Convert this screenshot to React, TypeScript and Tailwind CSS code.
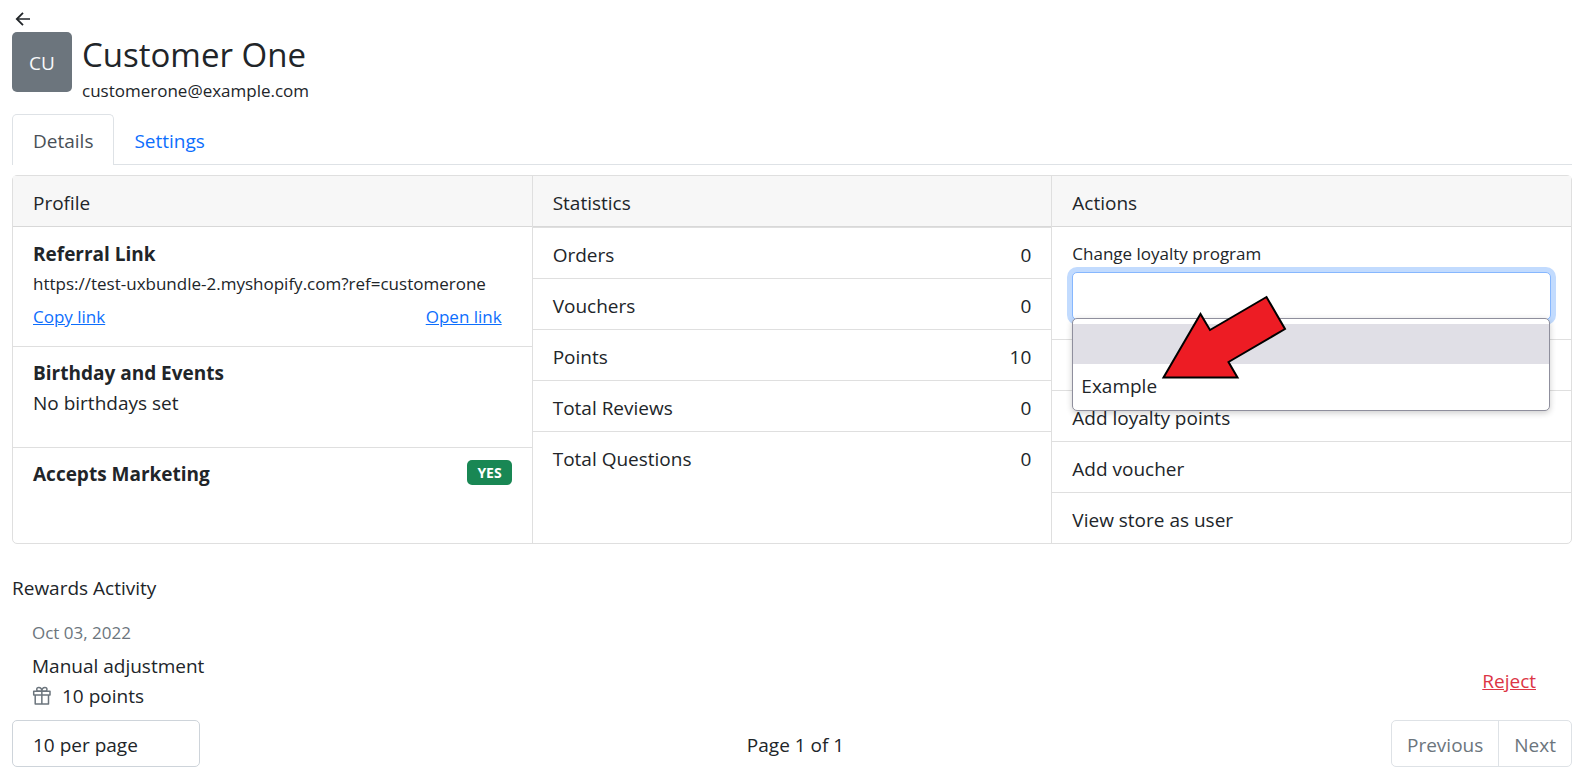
import type { ReactNode } from "react";

const statistics = [
  { label: "Orders", value: 0 },
  { label: "Vouchers", value: 0 },
  { label: "Points", value: 10 },
  { label: "Total Reviews", value: 0 },
  { label: "Total Questions", value: 0 },
];

function BackIcon() {
  return (
    <svg viewBox="0 0 20 20" className="size-5" fill="none" stroke="#212529" aria-hidden="true">
      <path d="M18 10H5" strokeWidth="1.5" />
      <path d="M11 3.800L4.800 10l6.200 6.200" strokeWidth="1.800" />
    </svg>
  );
}

function GiftIcon() {
  return (
    <svg
      viewBox="0 0 20 20"
      className="size-5"
      fill="none"
      stroke="#6c757d"
      strokeWidth="1.500"
      strokeLinejoin="round"
      aria-hidden="true"
    >
      <path d="M1.700 5.300H18V9H1.700ZM3.200 9V18.100H16.500V9M9.850 5.300V18.100" />
      <path d="M9.850 5.300H6.500C4.300 5.300 4 1.500 6.700 1.500C9 1.500 9.850 3.500 9.850 5.300ZM9.850 5.300H13.200C15.400 5.300 15.700 1.500 13 1.500C10.700 1.500 9.850 3.500 9.850 5.300Z" />
    </svg>
  );
}

function PointerArrow() {
  return (
    <svg viewBox="0 0 126 86" className="absolute left-[89px] top-[22px] z-20 h-[86px] w-[126px]" aria-hidden="true">
      <path
        d="M2.500 83.500L39.500 20L49 36L105.500 3L124 35L67.500 68L76.500 83.500Z"
        fill="#ed1c24"
        stroke="#000"
        strokeWidth="2"
      />
    </svg>
  );
}

function Column({ title, children }: { title: string; children: ReactNode }) {
  return (
    <section className="flex flex-1 flex-col border-r border-[#dfdfdf] last:border-r-0">
      <h2 className="border-b border-[#d8d8d8] bg-[#f7f7f7] px-5 pt-3 pb-2">{title}</h2>
      {children}
    </section>
  );
}

function ActionRow({ children }: { children?: ReactNode }) {
  return (
    <li className="border-t border-[#dfdfdf]">
      <button type="button" className="block min-h-[50px] w-full px-5 pt-3 pb-2 text-left">
        {children}
      </button>
    </li>
  );
}

export default function App() {
  return (
    <div className="bg-white px-3 pb-2 pr-[10px] font-['Open_Sans',sans-serif] text-[19px] leading-[30px] text-[#212529]">
      <header>
        <div className="flex h-8 items-center pt-[6px]">
          <a href="#back" aria-label="Back">
            <BackIcon />
          </a>
        </div>
        <div className="flex gap-[10px]">
          <div className="flex size-[60px] items-center justify-center rounded-[5px] bg-[#6c757d] pt-[2px] text-[#f8f9fa]">
            CU
          </div>
          <div className="pt-[2px]">
            <h1 className="text-[33px] leading-[42px]">Customer One</h1>
            <p className="text-[17px]">customerone@example.com</p>
          </div>
        </div>
      </header>

      <nav className="mt-2 flex border-b border-[#dee2e6]">
        <a
          href="#details"
          className="-mb-px rounded-t-[5px] border border-b-0 border-[#dee2e6] bg-white px-5 pt-[11px] pb-[9px] text-[#495057]"
        >
          Details
        </a>
        <a href="#settings" className="px-5 pt-3 pb-2 text-[#0d6efd]">
          Settings
        </a>
      </nav>

      <main>
        <div className="mt-[10px] flex rounded-[5px] border border-[#dfdfdf]">
          <Column title="Profile">
            <div className="border-b border-[#dfdfdf] px-5 pt-3 pb-[14px]">
              <h3 className="font-bold">Referral Link</h3>
              <p className="text-[17px]">https://test-uxbundle-2.myshopify.com?ref=customerone</p>
              <div className="mt-[3px] flex justify-between pr-[10px] text-[17px] text-[#0d6efd]">
                <button type="button" className="underline">
                  Copy link
                </button>
                <a href="#open" className="underline">
                  Open link
                </a>
              </div>
            </div>
            <div className="border-b border-[#dfdfdf] px-5 pt-[11px] pb-[29px]">
              <h3 className="font-bold">Birthday and Events</h3>
              <p>No birthdays set</p>
            </div>
            <div className="flex items-start justify-between px-5 pt-[11px]">
              <h3 className="font-bold">Accepts Marketing</h3>
              <span className="mt-px rounded-[5px] bg-[#198754] px-[10px] text-[14px] leading-[25px] font-bold text-white">
                YES
              </span>
            </div>
          </Column>

          <Column title="Statistics">
            <dl>
              {statistics.map((item) => (
                <div key={item.label} className="flex justify-between border-t border-[#dfdfdf] px-5 pt-3 pb-2">
                  <dt>{item.label}</dt>
                  <dd>{item.value}</dd>
                </div>
              ))}
            </dl>
          </Column>

          <Column title="Actions">
            <div className="px-5 pt-3 pb-[19px]">
              <label htmlFor="program" className="block text-[17px]">
                Change loyalty program
              </label>
              <div className="relative mt-[3px]">
                <select
                  id="program"
                  className="block h-[48px] w-full appearance-none rounded-[5px] border border-[#86b7fe] bg-white px-5 shadow-[0_0_0_5px_#c2dbfe] outline-none"
                />
                <ul
                  role="listbox"
                  aria-label="Loyalty programs"
                  className="absolute left-0 right-px top-[46px] z-10 rounded-[5px] border border-[#8f8f9d] bg-white py-[5px] shadow-[0_2px_6px_rgba(0,0,0,0.2)]"
                >
                  <li role="option" aria-selected="true" className="h-10 bg-[#e0dfe6]" />
                  <li role="option" aria-selected="false" className="h-[41px] px-2 pt-[7px]">
                    Example
                  </li>
                </ul>
                <PointerArrow />
              </div>
            </div>
            <ul>
              <ActionRow />
              <ActionRow>Add loyalty points</ActionRow>
              <ActionRow>Add voucher</ActionRow>
              <ActionRow>View store as user</ActionRow>
            </ul>
          </Column>
        </div>

        <h2 className="mt-[29px]">Rewards Activity</h2>
        <div className="mt-[15px] flex items-end justify-between pr-9 pl-5">
          <div>
            <p className="text-[17px] text-[#6c757d]">Oct 03, 2022</p>
            <p className="mt-[3px]">Manual adjustment</p>
            <p className="flex items-center gap-[10px]">
              <GiftIcon />
              10 points
            </p>
          </div>
          <button type="button" className="mb-[15px] text-[#dc3545] underline">
            Reject
          </button>
        </div>

        <div className="mt-[9px] flex items-center justify-between">
          <select
            aria-label="Rows per page"
            className="h-[47px] w-[188px] appearance-none rounded-[5px] border border-[#ced4da] bg-white px-5 pt-[2px]"
          >
            <option>10 per page</option>
          </select>
          <p className="pt-[2px]">Page 1 of 1</p>
          <div className="flex rounded-[5px] border border-[#dee2e6] text-[#6c757d]">
            <button type="button" className="border-r border-[#dee2e6] px-[15px] pt-[9px] pb-[6px]">
              Previous
            </button>
            <button type="button" className="px-[15px] pt-[9px] pb-[6px]">
              Next
            </button>
          </div>
        </div>
      </main>
    </div>
  );
}
